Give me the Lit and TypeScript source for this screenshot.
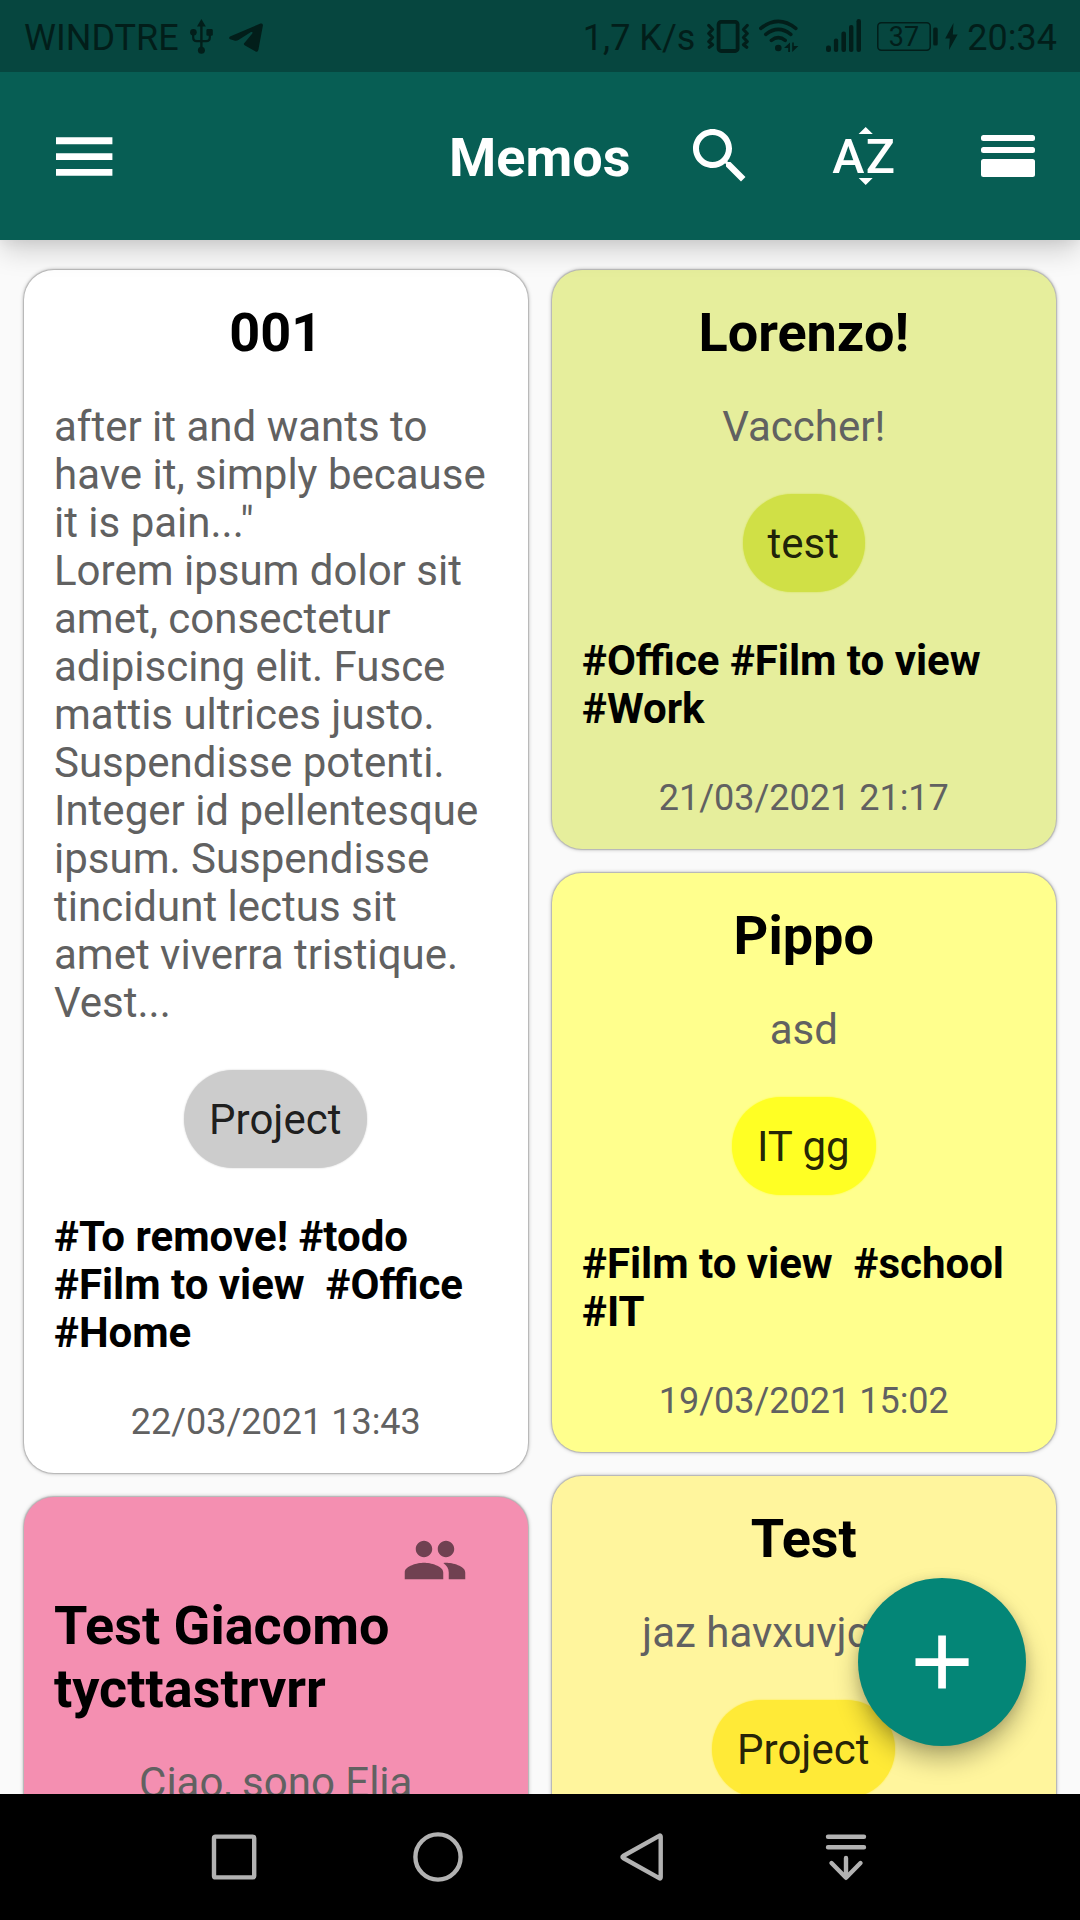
import { LitElement, html, css, svg, nothing } from "lit";
import { customElement, property } from "lit/decorators.js";

interface Memo {
  title: string;
  body: string;
  tone: string;
  category?: string;
  tags?: string;
  date?: string;
  shared?: boolean;
}

const LEFT: Memo[] = [
  {
    title: "001",
    body: `after it and wants to
have it, simply because
it is pain..."
Lorem ipsum dolor sit
amet, consectetur
adipiscing elit. Fusce
mattis ultrices justo.
Suspendisse potenti.
Integer id pellentesque
ipsum. Suspendisse
tincidunt lectus sit
amet viverra tristique.
Vest...`,
    tone: "white",
    category: "Project",
    tags: "#To remove! #todo\n#Film to view  #Office\n#Home",
    date: "22/03/2021 13:43",
  },
  {
    title: "Test Giacomo\ntycttastrvrr",
    body: "Ciao, sono Elia",
    tone: "pink",
    shared: true,
  },
];

const RIGHT: Memo[] = [
  {
    title: "Lorenzo!",
    body: "Vaccher!",
    tone: "lime",
    category: "test",
    tags: "#Office #Film to view\n#Work",
    date: "21/03/2021 21:17",
  },
  {
    title: "Pippo",
    body: "asd",
    tone: "lemon",
    category: "IT gg",
    tags: "#Film to view  #school\n#IT",
    date: "19/03/2021 15:02",
  },
  {
    title: "Test",
    body: "jaz havxuvjqxuvvi",
    tone: "yellow",
    category: "Project",
  },
];

@customElement("status-bar")
export class StatusBar extends LitElement {
  static styles = css`
    :host {
      display: flex;
      align-items: center;
      justify-content: space-between;
      height: 72px;
      padding: 0 23px 0 24px;
      box-sizing: border-box;
      background: #06463f;
      color: #021e1a;
      font-size: 36px;
      line-height: 42px;
      white-space: nowrap;
    }
    .group {
      display: flex;
      align-items: center;
    }
    .label {
      padding-top: 3px;
    }
    svg {
      display: block;
      height: 72px;
      flex: none;
    }
    .usb { margin-left: 11px; }
    .plane { margin-left: 16px; }
    .vibrate { margin: 0 10px 0 12px; }
    .wifi { margin-right: 27px; }
    .signal { margin-right: 16px; }
    .battery { margin-right: 7px; }
    .bolt { margin-right: 9px; }
    .charge {
      font: 400 27px Roboto, sans-serif;
    }
  `;

  render() {
    return html`
      <div class="group">
        <span class="label">WINDTRE</span>
        <svg class="usb" width="23" viewBox="0 0 23 72" fill="currentColor">
          <path d="M11.4 19l4.4 7.5h-8.8z" />
          <path d="M11.4 25v26" fill="none" stroke="currentColor" stroke-width="2.4" />
          <path d="M3.2 33v4.5q0 3.6 3.6 3.6h9.4q3.6 0 3.6-3.6v-4.5" fill="none" stroke="currentColor" stroke-width="2.2" />
          <circle cx="3.4" cy="32.3" r="3.3" />
          <rect x="16.4" y="29" width="6.4" height="6.8" rx="1.4" />
          <circle cx="11.4" cy="50.2" r="3.5" />
        </svg>
        <svg class="plane" width="34" viewBox="0 0 34 72" fill="currentColor">
          <path d="M1 36.6L31.5 23.6Q34 22.8 33.9 25.4L29.4 49.8Q28.8 52.8 26.2 51.3L15.6 45.2Q14.2 44.2 15.4 42.9L23.3 33.4Q24.2 31.6 22 32.1L9.4 40Q7.8 41.1 6 40.7L1.2 39.2Q-.8 38 1 36.6z" />
        </svg>
      </div>
      <div class="group">
        <span class="label">1,7 K/s</span>
        <svg class="vibrate" width="42" viewBox="0 0 42 72" fill="none" stroke="currentColor" stroke-linecap="round" stroke-linejoin="round">
          <rect x="11.6" y="21.8" width="19" height="29.2" rx="2.5" stroke-width="3.8" />
          <path d="M1.8 25.5l3.7 4-3.7 4 3.7 4-3.7 4 3.7 3.2-3.2 2.5M40.2 25.5l-3.7 4 3.7 4-3.7 4 3.7 4-3.7 3.2 3.2 2.5" stroke-width="3.2" />
        </svg>
        <svg class="wifi" width="40" viewBox="0 0 40 72" fill="none" stroke="currentColor" stroke-width="3.6" stroke-linecap="round">
          <path d="M1.8 28.3q17.5-14 35 0M6.8 34.3q12.5-10 25 0M12.4 40.3q6.9-5.4 13.8 0" />
          <circle cx="19.3" cy="48" r="3.3" fill="currentColor" stroke="none" />
          <path d="M25 48l6-5.5v9.5h-1.8v-4zM33.2 52v-9.5h1.6v3.5h4.6z" fill="currentColor" stroke="none" />
        </svg>
        <svg class="signal" width="35" viewBox="0 0 35 72" fill="currentColor">
          <rect x="0" y="45.5" width="5" height="6.5" rx="2.2" />
          <rect x="7.9" y="38.5" width="4.3" height="13.5" rx="2.1" />
          <rect x="15.4" y="31.5" width="4.6" height="20.5" rx="2.2" />
          <rect x="23" y="25" width="4.4" height="27" rx="2.1" />
          <rect x="30.5" y="19" width="4.5" height="33" rx="2.2" />
        </svg>
        <svg class="battery" width="61" viewBox="0 0 61 72">
          <rect x=".8" y="22.8" width="52.4" height="27.5" rx="3.5" fill="none" stroke="currentColor" stroke-width="1.5" />
          <rect x="56.2" y="27.5" width="4.5" height="18" rx="1.6" fill="currentColor" />
          <text class="charge" x="27" y="45.8" text-anchor="middle" fill="currentColor">37</text>
        </svg>
        <svg class="bolt" width="13" viewBox="0 0 13 72" fill="currentColor">
          <path d="M8.5 23L.2 38.5h4.6L4 50 12.6 34.5H7.8z" />
        </svg>
        <span class="label">20:34</span>
      </div>
    `;
  }
}

@customElement("app-toolbar")
export class AppToolbar extends LitElement {
  static styles = css`
    :host {
      display: flex;
      align-items: center;
      gap: 72px;
      height: 168px;
      padding: 0 36px 0 48px;
      box-sizing: border-box;
      background: #075e54;
      color: #fff;
    }
    .title {
      flex: 1;
      margin: 0 -18.5px 0 0;
      padding-top: 2px;
      text-align: right;
      font-size: 54px;
      line-height: 63px;
      font-weight: 700;
    }
    svg {
      display: block;
      flex: none;
      width: 72px;
      height: 72px;
      fill: #fff;
    }
    .letters {
      font: 500 48.5px Roboto, sans-serif;
    }
  `;

  render() {
    return html`
      <svg viewBox="0 0 72 72">
        <path d="M8 17.3h56.4v6.9H8zM8 33.2h56.4v6.7H8zM8 49h56.4v6.7H8z" />
      </svg>
      <h1 class="title">Memos</h1>
      <svg viewBox="0 0 24 24">
        <path d="M15.5 14h-.79l-.28-.27C15.41 12.59 16 11.11 16 9.5 16 5.91 13.09 3 9.5 3S3 5.91 3 9.5 5.91 16 9.5 16c1.61 0 3.09-.59 4.23-1.57l.27.28v.79l5 4.99L20.49 19l-4.99-5zm-6 0C7.01 14 5 11.99 5 9.5S7.01 5 9.5 5 14 7.01 14 9.5 11.99 14 9.5 14z" />
      </svg>
      <svg viewBox="0 0 72 72">
        <path d="M37.7 6.9l7.1 7.1H30.6zM37.7 65.1l7-7h-14z" />
        <text class="letters" x="4.3" y="53.3">A</text>
        <text class="letters" x="37.8" y="53.3">Z</text>
      </svg>
      <svg viewBox="0 0 72 72">
        <rect x="9" y="15" width="54" height="6" rx="2.5" />
        <rect x="9" y="27" width="54" height="6" rx="2.5" />
        <rect x="9" y="39" width="54" height="18" rx="2.5" />
      </svg>
    `;
  }
}

@customElement("memo-card")
export class MemoCard extends LitElement {
  @property({ attribute: false }) memo!: Memo;

  static styles = css`
    :host {
      display: block;
    }
    .card {
      display: flex;
      flex-direction: column;
      align-items: center;
      padding: 31px 30.5px 30px 30px;
      border-radius: 30px;
      box-shadow: 0 0 1px 0.5px rgba(0, 0, 0, 0.14), 0 0 4px rgba(0, 0, 0, 0.36);
      white-space: pre;
      line-height: 48px;
      font-size: 42px;
      color: #616161;
    }
    .white { background: #fff; --chip: #cccccc; }
    .pink { background: #f48fb1; --chip: #f06292; }
    .lime { background: #e6ee9c; --chip: #d0e046; }
    .lemon { background: #ffff8d; --chip: #ffff24; }
    .yellow { background: #fff59d; --chip: #ffea37; }
    .shared {
      align-self: flex-end;
      width: 66px;
      height: 66px;
      margin: -1px 29.5px 1px 0;
      fill: rgba(0, 0, 0, 0.54);
    }
    .title {
      margin: 0 0 39px;
      font-size: 54px;
      line-height: 63px;
      font-weight: 700;
      color: #000;
    }
    .wide {
      align-self: flex-start;
    }
    .body {
      margin: 0;
    }
    .chip {
      height: 98px;
      box-sizing: border-box;
      margin-top: 43px;
      padding: 26px 26px 24px 25px;
      border-radius: 49px;
      background: var(--chip);
      box-shadow: 0 0 2px var(--chip);
      color: rgba(0, 0, 0, 0.87);
    }
    .tags {
      align-self: flex-start;
      margin-top: 45px;
      font-weight: 700;
      color: #000;
    }
    .date {
      margin-top: 44px;
      font-size: 36px;
      line-height: 42px;
    }
  `;

  render() {
    const m = this.memo;
    return html`<article class="card ${m.tone}">${m.shared
      ? html`<svg class="shared" viewBox="0 0 24 24">${svg`<path d="M16 11c1.66 0 2.99-1.34 2.99-3S17.66 5 16 5c-1.66 0-3 1.34-3 3s1.34 3 3 3zm-8 0c1.66 0 2.99-1.34 2.99-3S9.66 5 8 5C6.34 5 5 6.34 5 8s1.34 3 3 3zm0 2c-2.33 0-7 1.17-7 3.5V19h14v-2.5c0-2.33-4.67-3.5-7-3.5zm8 0c-.29 0-.62.02-.97.05 1.16.84 1.97 1.97 1.97 3.45V19h6v-2.5c0-2.33-4.67-3.5-7-3.5z" />`}</svg>`
      : nothing}<h2 class="title ${m.title.includes("\n") ? "wide" : ""}">${m.title}</h2><p class="body ${m.body.includes("\n") ? "wide" : ""}">${m.body}</p>${m.category
      ? html`<span class="chip">${m.category}</span>`
      : nothing}${m.tags ? html`<div class="tags">${m.tags}</div>` : nothing}${m.date
      ? html`<time class="date">${m.date}</time>`
      : nothing}</article>`;
  }
}

@customElement("nav-bar")
export class NavBar extends LitElement {
  static styles = css`
    :host {
      display: grid;
      grid-template-columns: repeat(4, 204px);
      justify-content: center;
      place-items: center;
      height: 126px;
      background: #000;
    }
    svg {
      display: block;
      width: 60px;
      height: 60px;
      fill: none;
      stroke: #b2b2b2;
      stroke-width: 4.4px;
      stroke-linecap: round;
      stroke-linejoin: round;
    }
  `;

  render() {
    return html`
      <svg viewBox="0 0 60 60"><rect x="10" y="9.6" width="40.2" height="40.8" rx="1.5" /></svg>
      <svg viewBox="0 0 60 60"><circle cx="30" cy="30" r="22.6" /></svg>
      <svg viewBox="0 0 60 60"><path d="M47.2 8.8q1.5-.9 1.5.9v40.6q0 1.8-1.5.9L11.2 31q-1.5-1 0-2z" /></svg>
      <svg viewBox="0 0 60 60"><path d="M12 9.7h36M12 20.3h36M30 31v19M15.5 36L30 50.8 44.5 36" /></svg>
    `;
  }
}

@customElement("app-root")
export class AppRoot extends LitElement {
  static styles = css`
    :host {
      display: flex;
      flex-direction: column;
      position: relative;
      width: 1080px;
      height: 1920px;
      overflow: hidden;
      background: #fafafa;
      font-family: Roboto, sans-serif;
    }
    .header {
      position: relative;
      z-index: 1;
      box-shadow: 0 12px 26px -2px rgba(0, 0, 0, 0.18), 0 2px 12px rgba(0, 0, 0, 0.06);
    }
    .board {
      flex: 1;
      min-height: 0;
      overflow: hidden;
      display: grid;
      grid-template-columns: 504px 504px;
      gap: 24px;
      padding: 30px 24px 0;
      align-items: start;
    }
    .column {
      display: flex;
      flex-direction: column;
      gap: 24px;
    }
    .fab {
      position: absolute;
      right: 54px;
      bottom: 174px;
      width: 168px;
      height: 168px;
      padding: 0;
      border: 0;
      border-radius: 50%;
      background: #048677;
      box-shadow: 0 14px 24px rgba(0, 0, 0, 0.28), 0 2px 12px rgba(0, 0, 0, 0.12);
    }
    .plus {
      display: block;
      width: 168px;
      height: 168px;
      fill: #fff;
    }
  `;

  render() {
    const column = (memos: Memo[]) =>
      html`<div class="column">${memos.map((m) => html`<memo-card .memo=${m}></memo-card>`)}</div>`;
    return html`
      <header class="header">
        <status-bar></status-bar>
        <app-toolbar></app-toolbar>
      </header>
      <main class="board">${column(LEFT)}${column(RIGHT)}</main>
      <nav-bar></nav-bar>
      <button class="fab" aria-label="Add">
        <svg class="plus" viewBox="0 0 168 168">
          <path d="M80.2 57.5h7.7v22.7h22.7v7.7H87.9v22.7h-7.7V87.9H57.5v-7.7h22.7z" />
        </svg>
      </button>
    `;
  }
}
